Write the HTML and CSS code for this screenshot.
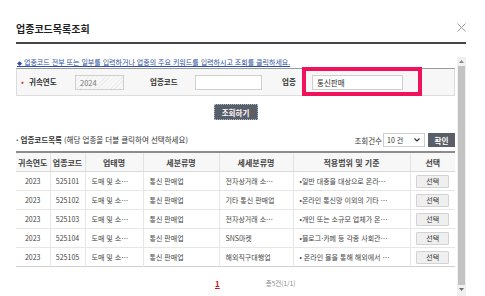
FILE: index.html
```html
<!DOCTYPE html>
<html lang="ko">
<head>
    <meta charset="UTF-8">
    <meta name="viewport" content="width=device-width, initial-scale=1.0">
    <title>업종코드목록조회</title>
    <link rel="stylesheet" href="styles.css">
</head>
<body>

    <div class="modal">
        <!-- Modal Header -->
        <div class="modal-head">
            <h2 class="modal-title">업종코드목록조회</h2>
            <button class="close-btn" aria-label="닫기">
                <svg width="9" height="9" viewBox="0 0 9 9"><path d="M0.5 0.5L8.5 8.5M8.5 0.5L0.5 8.5" stroke="#9a9a9a" stroke-width="1" fill="none"/></svg>
            </button>
        </div>

        <div class="modal-body">
            <div class="scroll-content">
                <p class="guide"><span class="guide-mark">◆</span> 업종코드 전부 또는 일부를 입력하거나 업종의 주요 키워드를 입력하시고 조회를 클릭하세요.</p>

                <!-- Search Box -->
                <div class="search-box">
                    <span class="field-label label-year"><span class="bullet">•</span>귀속연도</span>
                    <input class="field-input input-year" type="text" value="2024" disabled>
                    <span class="field-label label-code">업종코드</span>
                    <input class="field-input input-code" type="text">
                    <span class="field-label label-type">업종</span>
                    <input class="field-input input-type" type="text" value="통신판매">
                    <div class="highlight"></div>
                </div>

                <div class="search-actions">
                    <button class="btn-dark btn-search">조회하기</button>
                </div>

                <!-- List Header -->
                <div class="list-head">
                    <div class="list-title"><span class="dot">·</span> <b>업종코드목록</b> (해당 업종을 더블 클릭하여 선택하세요)</div>
                    <div class="list-tools">
                        <span class="count-label">조회건수</span>
                        <div class="fake-select">
                            <span>10 건</span>
                            <svg width="6" height="4" viewBox="0 0 6 4"><path d="M0.5 0.5L3 3L5.5 0.5" stroke="#333" stroke-width="1.2" fill="none"/></svg>
                        </div>
                        <button class="btn-dark btn-ok">확인</button>
                    </div>
                </div>

                <!-- Code Table -->
                <table class="code-table">
                    <colgroup>
                        <col class="w-year"><col class="w-code"><col class="w-biz"><col class="w-sub">
                        <col class="w-detail"><col class="w-scope"><col class="w-pick">
                    </colgroup>
                    <thead>
                        <tr>
                            <th>귀속연도</th>
                            <th>업종코드</th>
                            <th>업태명</th>
                            <th>세분류명</th>
                            <th>세세분류명</th>
                            <th>적용범위 및 기준</th>
                            <th>선택</th>
                        </tr>
                    </thead>
                    <tbody>
                        <tr>
                            <td class="c">2023</td><td class="c">525101</td><td>도매 및 소…</td><td>통신 판매업</td>
                            <td>전자상거래 소…</td><td>•일반 대중을 대상으로 온라…</td>
                            <td class="c"><button class="btn-pick">선택</button></td>
                        </tr>
                        <tr>
                            <td class="c">2023</td><td class="c">525102</td><td>도매 및 소…</td><td>통신 판매업</td>
                            <td>기타 통신 판매업</td><td>•온라인 통신망 이외의 기타 …</td>
                            <td class="c"><button class="btn-pick">선택</button></td>
                        </tr>
                        <tr>
                            <td class="c">2023</td><td class="c">525103</td><td>도매 및 소…</td><td>통신 판매업</td>
                            <td>전자상거래 소…</td><td>•개인 또는 소규모 업체가 온…</td>
                            <td class="c"><button class="btn-pick">선택</button></td>
                        </tr>
                        <tr>
                            <td class="c">2023</td><td class="c">525104</td><td>도매 및 소…</td><td>통신 판매업</td>
                            <td>SNS마켓</td><td>•블로그·카페 등 각종 사회관…</td>
                            <td class="c"><button class="btn-pick">선택</button></td>
                        </tr>
                        <tr>
                            <td class="c">2023</td><td class="c">525105</td><td>도매 및 소…</td><td>통신 판매업</td>
                            <td>해외직구대행업</td><td>• 온라인 몰을 통해 해외에서 …</td>
                            <td class="c"><button class="btn-pick">선택</button></td>
                        </tr>
                    </tbody>
                </table>

                <!-- Pagination -->
                <div class="pager">
                    <a class="page-num">1</a>
                    <span class="page-total">총5건(1/1)</span>
                </div>
            </div>

            <!-- Scrollbar -->
            <div class="scrollbar">
                <div class="sb-arrow">
                    <svg width="5" height="3" viewBox="0 0 5 3"><path d="M0 3L2.5 0L5 3Z" fill="#8a8a8a"/></svg>
                </div>
                <div class="sb-thumb"></div>
                <div class="sb-arrow">
                    <svg width="5" height="3" viewBox="0 0 5 3"><path d="M0 0L2.5 3L5 0Z" fill="#6a6a6a"/></svg>
                </div>
            </div>
        </div>
    </div>

</body>
</html>
```
FILE: styles.css
```css
/* Global Styles */
body {
    font-family: "Noto Sans CJK KR", "Noto Sans", sans-serif;
    background-color: #fff;
    color: #333;
    margin: 0;
    height: 296px;
    overflow: hidden;
}

/* Modal */
.modal {
    padding: 0 19px 0 16px;
}

.modal-head {
    height: 44px;
    box-sizing: border-box;
    padding-top: 16px;
    border-bottom: 2px solid #454545;
    display: flex;
    align-items: center;
    justify-content: space-between;
}

.modal-title {
    margin: 0;
    font-size: 10px;
    font-weight: bold;
    line-height: 14px;
    color: #222;
}

.close-btn {
    background: none;
    border: none;
    padding: 0;
    width: 9px;
    height: 9px;
    display: flex;
    margin-top: -3px;
}

.modal-body {
    display: flex;
    gap: 2px;
    margin-top: 13px;
    height: 239px;
}

.scroll-content {
    flex: 1;
    min-width: 0;
}

/* Guide text */
.guide {
    margin: 0;
    font-size: 7px;
    line-height: 11px;
    color: #2d4f9e;
    text-decoration: underline;
    white-space: nowrap;
    padding-left: 1px;
}

.guide-mark {
    font-size: 5px;
}

/* Search Box */
.search-box {
    position: relative;
    height: 28px;
    box-sizing: border-box;
    border: 1px solid #dcdcdc;
    border-top-color: #9a9a9a;
    background: #f7f7f7;
    display: flex;
    align-items: center;
    padding-left: 4px;
}

.field-label {
    font-size: 7.5px;
    font-weight: bold;
    line-height: 12px;
    color: #333;
    flex-shrink: 0;
}

.bullet {
    display: inline-block;
    width: 8px;
    color: #d8343a;
}

.label-year { width: 54px; }
.label-code { width: 45px; margin-left: 26px; }
.label-type { width: 30px; margin-left: 20px; }

.field-input {
    box-sizing: border-box;
    height: 15px;
    border: 1px solid #cfcfcf;
    background: #fff;
    padding: 0 4px;
    font-family: inherit;
    font-size: 7.5px;
    color: #333;
    flex-shrink: 0;
}

.input-year {
    width: 49px;
    color: #777;
    background: repeating-linear-gradient(135deg, #efefef 0 1px, #f8f8f8 1px 3px);
}

.input-code { width: 67px; }
.input-type { width: 91px; }

.highlight {
    position: absolute;
    left: 285px;
    top: -2px;
    width: 120px;
    height: 29px;
    box-sizing: border-box;
    border: 4px solid #f0125b;
}

/* Buttons */
.search-actions {
    display: flex;
    justify-content: center;
    margin-top: 8px;
}

.btn-dark {
    background-color: #5a5e68;
    color: #fff;
    font-family: inherit;
    font-weight: bold;
    font-size: 7.5px;
    padding: 0;
    cursor: pointer;
}

.btn-search {
    width: 44px;
    height: 16px;
    border: 1px dotted #9ec3d6;
}

.btn-ok {
    width: 27px;
    height: 14px;
    border: none;
}

/* List header */
.list-head {
    display: flex;
    align-items: center;
    justify-content: space-between;
    margin-top: 13px;
    height: 14px;
}

.list-title {
    font-size: 7.5px;
    line-height: 12px;
    color: #333;
    white-space: nowrap;
}

.list-title .dot {
    font-weight: bold;
}

.list-tools {
    display: flex;
    align-items: center;
}

.count-label {
    font-size: 7.5px;
    margin-right: 1px;
}

.fake-select {
    box-sizing: border-box;
    width: 42px;
    height: 14px;
    border: 1px solid #cfcfcf;
    display: flex;
    align-items: center;
    justify-content: space-between;
    padding: 0 4px 0 3px;
    font-size: 7px;
    margin-right: 3px;
}

/* Table */
.code-table {
    width: 100%;
    table-layout: fixed;
    border-collapse: collapse;
    margin-top: 4px;
    border-top: 2px solid #8c8c8c;
    border-bottom: 1px solid #cfcfcf;
}

.w-year { width: 34px; }
.w-code { width: 35px; }
.w-biz { width: 58px; }
.w-sub { width: 76px; }
.w-detail { width: 74px; }
.w-scope { width: 117px; }
.w-pick { width: 45px; }

.code-table th {
    height: 18px;
    padding: 0;
    background: #f7f7f7;
    font-size: 8px;
    font-weight: bold;
    color: #444;
    border-bottom: 1px solid #dadada;
    border-left: 1px solid #e3e3e3;
    white-space: nowrap;
    overflow: hidden;
}

.code-table td {
    height: 18px;
    padding: 0 0 0 6px;
    font-size: 7px;
    color: #444;
    border-top: 1px solid #e6e6e6;
    border-left: 1px solid #e6e6e6;
    white-space: nowrap;
    overflow: hidden;
}

.code-table th:first-child,
.code-table td:first-child {
    border-left: none;
}

.code-table td.c {
    text-align: center;
    padding: 0;
}

.btn-pick {
    width: 33px;
    height: 13px;
    padding: 0;
    background: #efefef;
    border: 1px solid #d3d3d3;
    border-radius: 1px;
    font-family: inherit;
    font-size: 7px;
    color: #333;
    display: block;
    margin: 0 auto;
}

/* Pagination */
.pager {
    display: flex;
    align-items: center;
    margin-top: 9px;
    padding-left: 199px;
    height: 14px;
}

.page-num {
    color: #c8161d;
    font-weight: bold;
    font-size: 8px;
    text-decoration: underline;
}

.page-total {
    margin-left: 46px;
    font-size: 6.5px;
    color: #888;
}

/* Scrollbar */
.scrollbar {
    width: 9px;
    background: #f0f0f0;
    display: flex;
    flex-direction: column;
    align-items: center;
    padding-bottom: 2px;
    box-sizing: border-box;
}

.sb-arrow {
    height: 9px;
    display: flex;
    align-items: center;
    justify-content: center;
}

.sb-thumb {
    flex: 1;
    width: 7px;
    background: #c3c3c3;
}
```
